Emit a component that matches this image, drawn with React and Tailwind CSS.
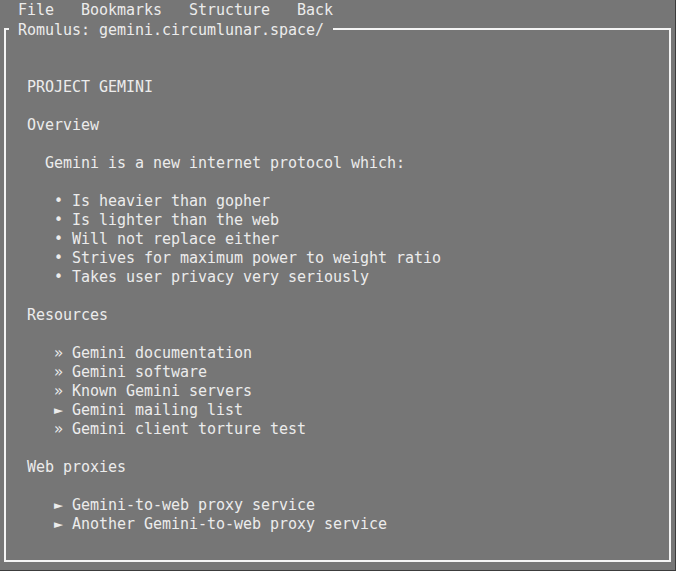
import React from "react";

const lines = [
  "",
  "",
  "  PROJECT GEMINI",
  "",
  "  Overview",
  "",
  "    Gemini is a new internet protocol which:",
  "",
  "     • Is heavier than gopher",
  "     • Is lighter than the web",
  "     • Will not replace either",
  "     • Strives for maximum power to weight ratio",
  "     • Takes user privacy very seriously",
  "",
  "  Resources",
  "",
  "     » Gemini documentation",
  "     » Gemini software",
  "     » Known Gemini servers",
  "     ► Gemini mailing list",
  "     » Gemini client torture test",
  "",
  "  Web proxies",
  "",
  "     ► Gemini-to-web proxy service",
  "     ► Another Gemini-to-web proxy service",
];

export default function App() {
  return (
    <div
      className="min-h-screen bg-[#3c3c3c] text-[15px] leading-[19px] tracking-[-0.03px] text-[#ececec]"
      style={{ fontFamily: '"DejaVu Sans Mono", "Liberation Mono", monospace' }}
    >
      <div className="w-[675px] h-[570px] bg-[#767676] overflow-hidden">
        <div className="h-[19px] pt-[2px] whitespace-pre leading-[17px]">{"  File   Bookmarks   Structure   Back"}</div>
        <div className="relative mt-[9px] ml-[4px] w-[667px] h-[534px] border-2 border-[#f4f4f4]">
          <div className="absolute left-[3px] top-[-9px] h-[19px] bg-[#767676] whitespace-pre">
            {" Romulus: gemini.circumlunar.space/ "}
          </div>
          <div className="pl-[3px] pt-[10px]">
            {lines.map((l, i) => (
              <div key={i} className="h-[19px] whitespace-pre">
                {l}
              </div>
            ))}
          </div>
        </div>
      </div>
    </div>
  );
}
